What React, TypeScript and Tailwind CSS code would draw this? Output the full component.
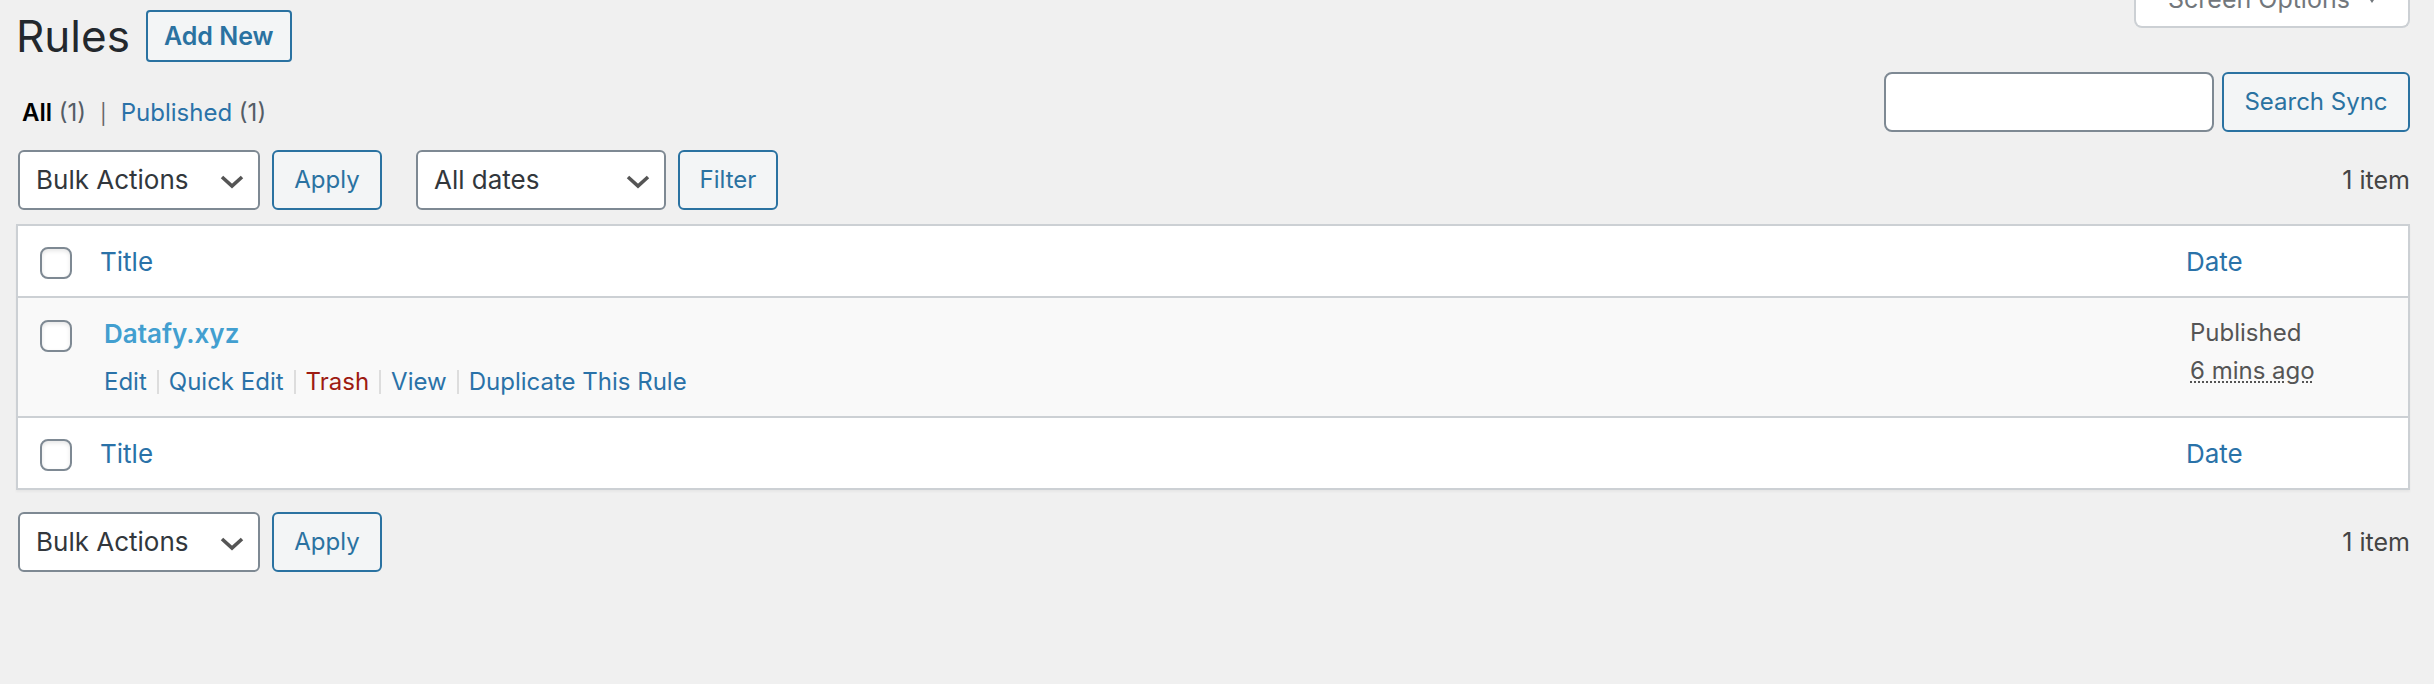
import { useState } from "react";

const linkClass = "text-[#2a72a8] hover:text-[#135e96]";
const buttonClass =
  "h-15 shrink-0 rounded-md border-2 border-[#2a72a1] bg-[#f3f5f6] text-[24px] text-[#2a72a1]";

type SelectBoxProps = { label: string; options: string[]; className: string };

function SelectBox({ label, options, className }: SelectBoxProps) {
  return (
    <div className={`relative shrink-0 ${className}`}>
      <select
        aria-label={label}
        className="h-15 w-full appearance-none rounded-md border-2 border-[#7e8993] bg-white pr-12 pl-4 text-[26px] text-[#32373c]"
      >
        {options.map((option) => (
          <option key={option}>{option}</option>
        ))}
      </select>
      <svg
        viewBox="0 0 24 16"
        className="pointer-events-none absolute top-6 right-4 h-4 w-6"
        fill="none"
        stroke="#555"
        strokeWidth="3.6"
        aria-hidden="true"
      >
        <path d="M2 3 12 12l10-9" />
      </svg>
    </div>
  );
}

function BulkActions() {
  return (
    <div className="flex gap-3">
      <SelectBox
        label="Select bulk action"
        options={["Bulk Actions", "Edit", "Move to Trash"]}
        className="w-[242px]"
      />
      <button type="button" className={`${buttonClass} w-[110px]`}>
        Apply
      </button>
    </div>
  );
}

type CheckProps = { label: string; checked: boolean; onChange: () => void };

function Check({ label, checked, onChange }: CheckProps) {
  return (
    <input
      type="checkbox"
      aria-label={label}
      checked={checked}
      onChange={onChange}
      className="block size-8 appearance-none rounded-lg border-2 border-[#7e8993] bg-white shadow-[inset_0_2px_4px_rgba(0,0,0,0.1)] checked:bg-[#2271b1]"
    />
  );
}

function HeadingCells({ checked, onChange }: { checked: boolean; onChange: () => void }) {
  return (
    <tr className="h-[71px] bg-white">
      <td className="pt-1 pl-[22px]">
        <Check label="Select all" checked={checked} onChange={onChange} />
      </td>
      <th scope="col" className="pt-0.5 text-left text-[26px] font-normal">
        <a href="#title" className={linkClass}>Title</a>
      </th>
      <th scope="col" className="pt-0.5 text-left text-[26px] font-normal">
        <a href="#date" className={linkClass}>Date</a>
      </th>
    </tr>
  );
}

const rowActions = ["Edit", "Quick Edit", "Trash", "View", "Duplicate This Rule"];

export default function App() {
  const [checked, setChecked] = useState(false);
  const toggle = () => setChecked(!checked);

  return (
    <div className="min-h-screen overflow-hidden bg-[#f0f0f0] pr-6 pl-4 font-['Inter','Liberation_Sans',sans-serif] text-[25px] leading-9 text-[#444]">
      <header className="flex h-18 items-start justify-between">
        <div className="flex items-center gap-4 pt-2.5">
          <h1 className="text-[44px] leading-[52px] text-[#23282d]">Rules</h1>
          <a
            href="#add"
            className="flex h-13 items-center rounded border-2 border-[#2a72a1] bg-[#f3f5f6] px-4 font-semibold text-[#2a72a1]"
          >
            Add New
          </a>
        </div>
        <button
          type="button"
          className="-mt-7 flex h-14 w-[276px] items-center gap-3.5 rounded-b-lg border-2 border-t-0 border-[#ccd0d4] bg-white pl-8 text-[#72777c]"
        >
          Screen Options
          <svg viewBox="0 0 16 10" className="h-2.5 w-4" fill="currentColor" aria-hidden="true">
            <path d="M2 0h12L8 9z" />
          </svg>
        </button>
      </header>

      <div className="flex items-end justify-between">
        <ul className="flex pl-1.5 text-[24px] text-[#555d66]">
          <li>
            <a href="#all" className="font-semibold text-black">All</a> (1)
            <span className="px-3.5 text-[20px] text-[#666]">|</span>
          </li>
          <li>
            <a href="#published" className={linkClass}>Published</a> (1)
          </li>
        </ul>
        <form className="flex gap-2" onSubmit={(event) => event.preventDefault()}>
          <input
            type="search"
            aria-label="Search Sync"
            className="h-15 w-[330px] rounded-lg border-2 border-[#7e8993] bg-white px-4"
          />
          <button type="submit" className={`${buttonClass} w-[188px]`}>
            Search Sync
          </button>
        </form>
      </div>

      <div className="mt-[18px] mb-3.5 flex items-center justify-between pl-0.5">
        <div className="flex gap-[34px]">
          <BulkActions />
          <div className="flex gap-3">
            <SelectBox
              label="Filter by date"
              options={["All dates"]}
              className="w-[250px]"
            />
            <button type="button" className={`${buttonClass} w-[100px]`}>
              Filter
            </button>
          </div>
        </div>
        <span>1 item</span>
      </div>

      <div className="border-2 border-[#ccd0d4] shadow-[0_2px_2px_rgba(0,0,0,0.04)]">
        <table className="w-full table-fixed border-collapse">
          <colgroup>
            <col className="w-[82px]" />
            <col />
            <col className="w-[222px]" />
          </colgroup>
          <thead>
            <HeadingCells checked={checked} onChange={toggle} />
          </thead>
          <tbody>
            <tr className="h-[120px] border-y-2 border-[#ccd0d4] bg-[#f9f9f9] align-top">
              <td className="pt-[22px] pl-[22px]">
                <Check label="Select Datafy.xyz" checked={checked} onChange={toggle} />
              </td>
              <td className="pt-[18px] pl-1">
                <a href="#rule" className="block text-[26px] font-semibold text-[#429fd0]">
                  Datafy.xyz
                </a>
                <div className="flex items-center pt-3 text-[24px]">
                  {rowActions.map((action, index) => (
                    <span key={action} className="flex items-center">
                      {index > 0 && <span className="mx-2.5 h-6 w-0.5 bg-[#ddd]" />}
                      <a
                        href="#rule"
                        className={action === "Trash" ? "text-[#9e1b12]" : linkClass}
                      >
                        {action}
                      </a>
                    </span>
                  ))}
                </div>
              </td>
              <td className="pt-4 pl-1 text-[24px] leading-[38px] text-[#555]">
                Published
                <br />
                <abbr
                  title="Publication time"
                  className="underline decoration-dotted decoration-2 underline-offset-2"
                >
                  6 mins ago
                </abbr>
              </td>
            </tr>
          </tbody>
          <tfoot>
            <HeadingCells checked={checked} onChange={toggle} />
          </tfoot>
        </table>
      </div>

      <div className="mt-[22px] flex items-center justify-between pl-0.5">
        <BulkActions />
        <span>1 item</span>
      </div>
    </div>
  );
}
